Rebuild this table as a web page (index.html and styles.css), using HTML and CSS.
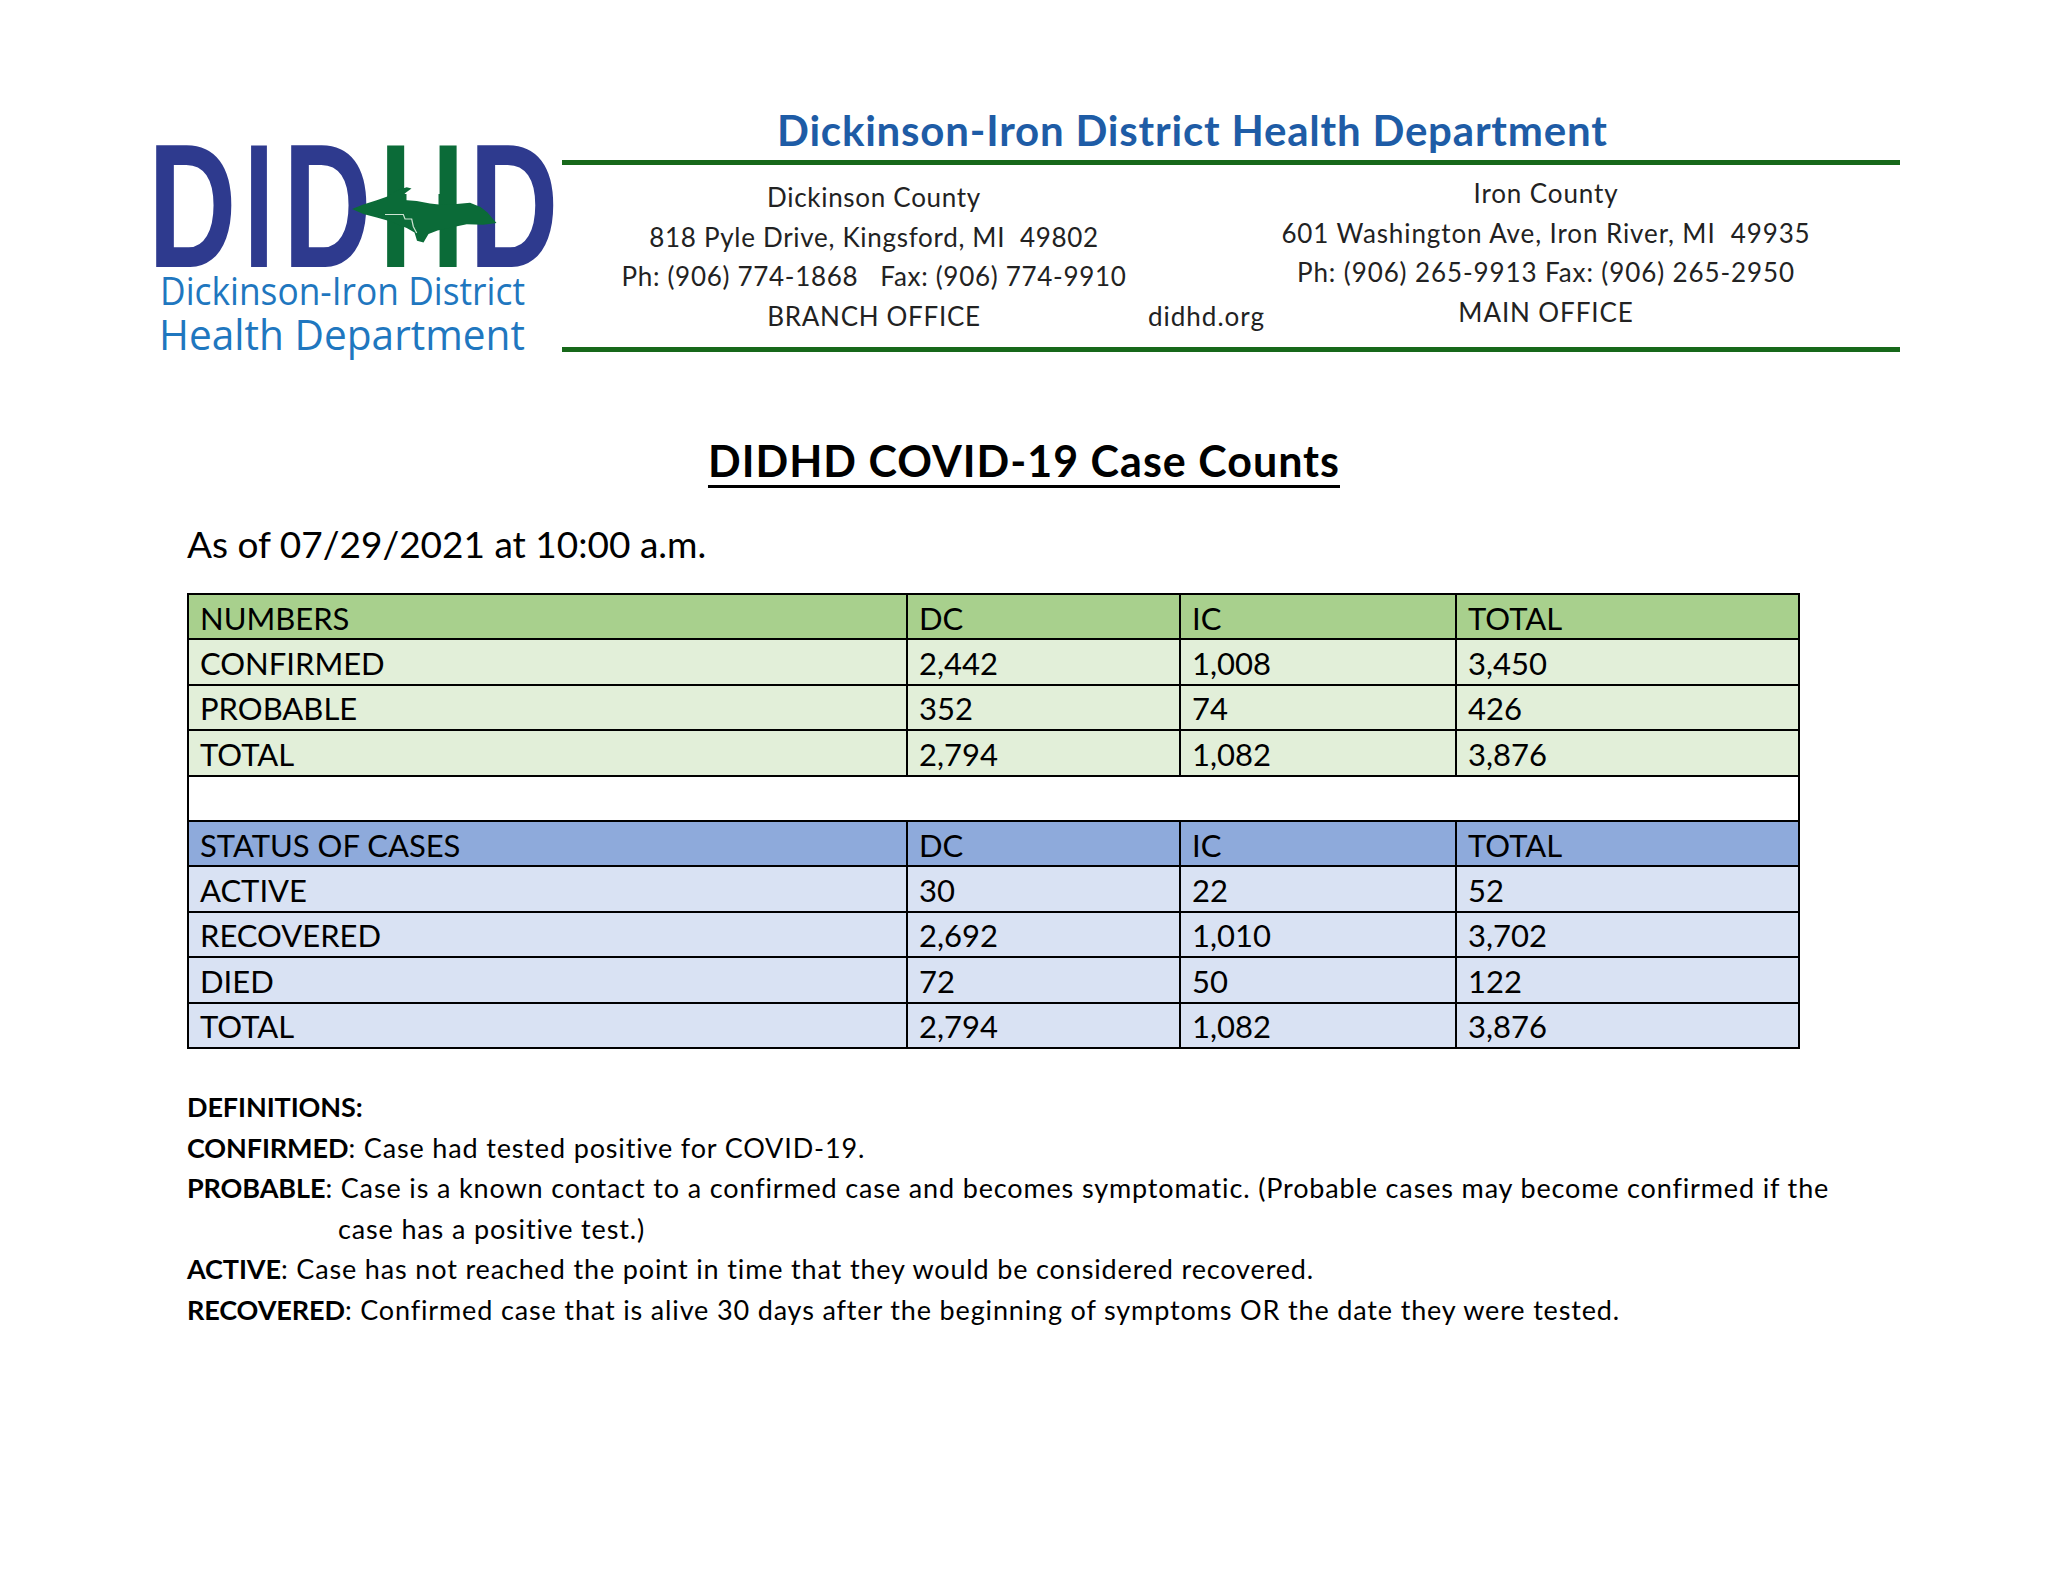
FILE: index.html
```html
<!DOCTYPE html>
<html lang="en">
<head>
<meta charset="utf-8">
<title>DIDHD COVID-19 Case Counts</title>
<link rel="stylesheet" href="styles.css">
</head>
<body>
<div class="page">
  <header class="letterhead">
    <svg class="logo" width="420" height="240" viewBox="0 0 420 240" xmlns="http://www.w3.org/2000/svg">
      <defs>
        <clipPath id="hclip">
          <rect x="230" y="0" width="36.5" height="240"/>
          <rect x="298.5" y="0" width="40" height="240"/>
        </clipPath>
      </defs>
      <g class="logo-letters">
        <text fill="#2e3a8e" transform="translate(8 137) scale(0.692 1)">D</text>
        <text fill="#2e3a8e" transform="translate(103.7 137) scale(0.62 1)">I</text>
        <text fill="#2e3a8e" transform="translate(143 137) scale(0.692 1)">D</text>
        <g clip-path="url(#hclip)">
          <text fill="#0b6b38" transform="translate(239.3 137) scale(0.667 1)">H</text>
        </g>
        <text fill="#2e3a8e" transform="translate(329 137) scale(0.7 1)">D</text>
      </g>
      <g transform="translate(10 0)">
        <polygon fill="#0b6b38" points="202,79 213.3,74.5 226.7,70.2 236.7,66.8 243.3,62.8 248.3,60 256.7,57.2 261.5,58.5 256,62.5 251,67 254,70 266.7,71 280,73.5 293.3,75 306.7,74 320,72.8 330.5,77 337.5,82.5 342.5,88.5 346.5,93 333.3,94.8 316.7,94.2 300,97.8 287.5,100.5 278.5,104 273.5,112.5 267,110.8 264.5,102.5 256.7,98 240,91.3 226.7,87.5 213.3,84"/>
        <polyline fill="none" stroke="#cfe3d3" stroke-width="1.2" points="235,84.5 253.3,84.5 255,89 261.7,89 263.3,96.5 266.7,103"/>
      </g>
      <text class="logo-sub" x="20" y="175" font-size="38" textLength="365" lengthAdjust="spacingAndGlyphs">Dickinson-Iron District</text>
      <text class="logo-sub" x="19" y="220" font-size="42" textLength="366" lengthAdjust="spacingAndGlyphs">Health Department</text>
    </svg>
    <div class="lh-right">
      <div class="lh-title">Dickinson-Iron District Health Department</div>
      <div class="lh-rule"></div>
      <div class="lh-info">
        <div class="lh-col lh-branch">
          <div>Dickinson County</div>
          <div>818 Pyle Drive, Kingsford, MI  49802</div>
          <div>Ph: (906) 774-1868   Fax: (906) 774-9910</div>
          <div>BRANCH OFFICE</div>
        </div>
        <div class="lh-web">didhd.org</div>
        <div class="lh-col lh-main">
          <div>Iron County</div>
          <div>601 Washington Ave, Iron River, MI  49935</div>
          <div>Ph: (906) 265-9913 Fax: (906) 265-2950</div>
          <div>MAIN OFFICE</div>
        </div>
      </div>
      <div class="lh-rule"></div>
    </div>
  </header>

  <h1 class="doc-title">DIDHD COVID-19 Case Counts</h1>
  <p class="asof">As of 07/29/2021 at 10:00 a.m.</p>

  <table class="counts">
    <colgroup>
      <col class="c-label"><col class="c-dc"><col class="c-ic"><col class="c-total">
    </colgroup>
    <tbody>
      <tr class="g-head"><td>NUMBERS</td><td>DC</td><td>IC</td><td>TOTAL</td></tr>
      <tr class="g-row"><td>CONFIRMED</td><td>2,442</td><td>1,008</td><td>3,450</td></tr>
      <tr class="g-row"><td>PROBABLE</td><td>352</td><td>74</td><td>426</td></tr>
      <tr class="g-row"><td>TOTAL</td><td>2,794</td><td>1,082</td><td>3,876</td></tr>
      <tr class="spacer"><td colspan="4"></td></tr>
      <tr class="b-head"><td>STATUS OF CASES</td><td>DC</td><td>IC</td><td>TOTAL</td></tr>
      <tr class="b-row"><td>ACTIVE</td><td>30</td><td>22</td><td>52</td></tr>
      <tr class="b-row"><td>RECOVERED</td><td>2,692</td><td>1,010</td><td>3,702</td></tr>
      <tr class="b-row"><td>DIED</td><td>72</td><td>50</td><td>122</td></tr>
      <tr class="b-row"><td>TOTAL</td><td>2,794</td><td>1,082</td><td>3,876</td></tr>
    </tbody>
  </table>

  <section class="defs">
    <p><b>DEFINITIONS:</b></p>
    <p><b>CONFIRMED</b>: Case had tested positive for COVID-19.</p>
    <p class="hang"><b>PROBABLE</b>: Case is a known contact to a confirmed case and becomes symptomatic. (Probable cases may become confirmed if the<br>case has a positive test.)</p>
    <p><b>ACTIVE</b>: Case has not reached the point in time that they would be considered recovered.</p>
    <p><b>RECOVERED</b>: Confirmed case that is alive 30 days after the beginning of symptoms OR the date they were tested.</p>
  </section>
</div>
</body>
</html>
```

FILE: styles.css
```css
html, body {
  margin: 0;
  padding: 0;
  background: #ffffff;
}

body {
  font-family: Lato, "Open Sans", "Liberation Sans", sans-serif;
  color: #000000;
}

.page {
  width: 2048px;
  height: 1582px;
  overflow: hidden;
}

/* ---------- Letterhead ---------- */
.letterhead {
  display: flex;
  padding-left: 140px;
}

.logo {
  flex: none;
  width: 420px;
  height: 240px;
  margin-top: 130px;
  overflow: visible;
}

.logo-letters {
  font-family: "Liberation Sans", Arial, sans-serif;
  font-weight: 700;
  font-size: 177px;
}

.logo-sub {
  font-family: "Open Sans", Lato, sans-serif;
  fill: #1f77bf;
}

.lh-right {
  margin-left: 2px;
  width: 1338px;
  padding-top: 106px;
}

.lh-title {
  height: 48px;
  margin-bottom: 6px;
  padding-left: 215px;
  font-weight: 700;
  font-size: 42px;
  letter-spacing: 0.8px;
  line-height: 48px;
  color: #1e5ca6;
  white-space: nowrap;
}

.lh-rule {
  height: 5px;
  background: #17681a;
}

.lh-info {
  display: grid;
  grid-template-columns: 586px 114px 638px;
  padding: 13px 0 11px;
  font-size: 26px;
  letter-spacing: 0.7px;
  line-height: 39.5px;
  color: #222222;
}

.lh-col {
  text-align: center;
}

.lh-col > div {
  white-space: pre;
}

.lh-branch {
  padding-left: 38px;
}

.lh-web {
  align-self: end;
  text-align: center;
  white-space: nowrap;
  letter-spacing: 1px;
}

.lh-main {
  padding-right: 70px;
  margin-top: -4px;
  letter-spacing: 0.9px;
}

/* ---------- Title ---------- */
.doc-title {
  margin: 67px 0 0;
  font-size: 43px;
  letter-spacing: 1px;
  line-height: 48px;
  font-weight: 700;
  text-align: center;
  text-decoration: underline;
  text-decoration-thickness: 3px;
  text-underline-offset: 8px;
}

.asof {
  margin: 37px 0 0 187px;
  font-size: 37px;
  line-height: 44px;
}

/* ---------- Table ---------- */
.counts {
  margin: 27px 0 0 187px;
  width: 1611px;
  border-collapse: collapse;
  table-layout: fixed;
  font-size: 31px;
  line-height: 36px;
}

.c-label { width: 719px; }
.c-dc { width: 273px; }
.c-ic { width: 276px; }
.c-total { width: 343px; }

.counts td {
  height: 45.4px;
  box-sizing: border-box;
  padding: 2px 14px 0 11px;
  border: 2px solid #000000;
  vertical-align: middle;
  white-space: nowrap;
}

.g-head td { background: #a8d08d; }
.g-row td { background: #e2efd9; }
.b-head td { background: #8eaadb; }
.b-row td { background: #d9e2f3; }
.spacer td { background: #ffffff; }

/* ---------- Definitions ---------- */
.defs {
  margin: 38px 0 0 187px;
  font-size: 27px;
  letter-spacing: 0.85px;
  line-height: 40.6px;
}

.defs p {
  margin: 0;
}

.defs b {
  font-weight: 700;
  letter-spacing: -0.1px;
}

.defs .hang {
  padding-left: 151px;
  text-indent: -151px;
}
```
